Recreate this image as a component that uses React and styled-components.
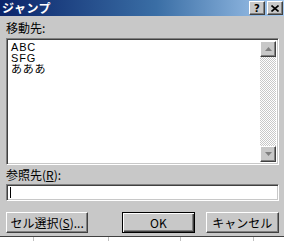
import styled, { createGlobalStyle } from 'styled-components';

const Global = createGlobalStyle`
  html, body {
    margin: 0;
    padding: 0;
    background: #ffffff;
    overflow: hidden;
  }
  body {
    font-family: "Noto Sans CJK JP", "DejaVu Sans", sans-serif;
  }
`

const FACE = '#c8c8c8';

const Screen = styled.div`
  width: 284px;
  height: 241px;
  display: flex;
  flex-direction: column;
`

const Dialog = styled.div`
  height: 236px;
  display: flex;
  flex-direction: column;
  background: ${FACE};
  border-bottom: 1px solid #404040;
`

const TitleBar = styled.div`
  height: 16px;
  display: flex;
  align-items: center;
  justify-content: space-between;
  padding: 0 1px 0 2px;
  background: linear-gradient(90deg, #0a246a 0%, #3a6ea5 55%, #a6caf0 100%);
`

const TitleText = styled.span`
  color: #ffffff;
  font-weight: 700;
  font-size: 12px;
  line-height: 14px;
  letter-spacing: 0.5px;
`

const TitleButtons = styled.div`
  display: flex;
  gap: 2px;
`

const CaptionButton = styled.div`
  width: 14px;
  height: 12px;
  display: flex;
  align-items: center;
  justify-content: center;
  background: ${FACE};
  border: 1px solid;
  border-color: #ffffff #404040 #404040 #ffffff;
  box-shadow: inset -1px -1px #808080;
  font-family: "DejaVu Sans", sans-serif;
  font-weight: 700;
  font-size: 10px;
  color: #000;
`

const Body = styled.div`
  display: flex;
  flex-direction: column;
  padding: 0 5px 0 6px;
`

const Label = styled.div`
  height: ${p => p.$h}px;
  display: flex;
  align-items: center;
  font-size: 12px;
  color: #000;
  u { text-decoration: underline; text-underline-offset: 1px; }
`

const Sunken = styled.div`
  border: 1px solid;
  border-color: #808080 #ffffff #ffffff #808080;
  box-shadow: inset 1px 1px #404040, inset -1px -1px ${FACE};
  background: #ffffff;
`

const ListBox = styled(Sunken)`
  height: 121px;
  display: flex;
  padding: 2px;
`

const Items = styled.div`
  flex: 1;
  padding: 1px 0 0 2px;
  font-family: "Liberation Sans", "Noto Sans CJK JP", sans-serif;
  font-size: 11px;
  line-height: 11px;
  letter-spacing: 0.8px;
  color: #000;
`

const Item = styled.div`
  height: 11px;
`

const ScrollBar = styled.div`
  width: 16px;
  display: flex;
  flex-direction: column;
  justify-content: space-between;
  background-image: conic-gradient(${FACE} 25%, #ffffff 0 50%, ${FACE} 0 75%, #ffffff 0);
  background-size: 2px 2px;
`

const ArrowButton = styled.div`
  width: 14px;
  height: 14px;
  display: flex;
  align-items: center;
  justify-content: center;
  background: ${FACE};
  border: 1px solid;
  border-color: #ffffff #404040 #404040 #ffffff;
  box-shadow: inset -1px -1px #808080;
`

const Input = styled(Sunken)`
  height: 15px;
  display: flex;
  align-items: center;
  padding-left: 3px;
`

const Caret = styled.div`
  width: 1px;
  height: 11px;
  background: #000;
`

const ButtonRow = styled.div`
  display: flex;
  margin-top: 11px;
`

const Button = styled.div`
  width: ${p => p.$w}px;
  height: 19px;
  margin-left: ${p => p.$ml || 0}px;
  display: flex;
  align-items: center;
  justify-content: center;
  background: ${FACE};
  border: 1px solid;
  border-color: #ffffff #404040 #404040 #ffffff;
  box-shadow: inset -1px -1px #808080;
  font-size: 12px;
  color: #000;
  ${p => p.$default && `
    border: 1px solid #000;
    box-shadow: inset 1px 1px #ffffff, inset -1px -1px #404040, inset -2px -2px #808080;
  `}
  u { text-decoration: underline; text-underline-offset: 1px; }
`

const Sheet = styled.div`
  flex: 1;
  display: flex;
  background: #ffffff;
`

const Cell = styled.div`
  width: ${p => p.$w}px;
  border-right: 1px solid #c0c0c0;
`

function Arrow({ up }) {
  return (
    <svg width="7" height="4" viewBox="0 0 7 4">
      <path d={up ? 'M3.5 0 L7 4 L0 4 Z' : 'M0 0 L7 0 L3.5 4 Z'} fill="#808080" />
    </svg>
  );
}

function App() {
  return (
    <Screen>
      <Global />
      <Dialog>
        <TitleBar>
          <TitleText>ジャンプ</TitleText>
          <TitleButtons>
            <CaptionButton>?</CaptionButton>
            <CaptionButton>
              <svg width="8" height="7" viewBox="0 0 8 7">
                <path d="M0.5 0.5 L7.5 6.5 M7.5 0.5 L0.5 6.5" stroke="#000" strokeWidth="1.6" />
              </svg>
            </CaptionButton>
          </TitleButtons>
        </TitleBar>
        <Body>
          <Label $h={22}>移動先:</Label>
          <ListBox>
            <Items>
              <Item>ABC</Item>
              <Item>SFG</Item>
              <Item>あああ</Item>
            </Items>
            <ScrollBar>
              <ArrowButton><Arrow up /></ArrowButton>
              <ArrowButton><Arrow /></ArrowButton>
            </ScrollBar>
          </ListBox>
          <Label $h={19}>参照先(<u>R</u>):</Label>
          <Input><Caret /></Input>
          <ButtonRow>
            <Button $w={82}>セル選択(<u>S</u>)...</Button>
            <Button $w={72} $ml={34} $default>OK</Button>
            <Button $w={73} $ml={11}>キャンセル</Button>
          </ButtonRow>
        </Body>
      </Dialog>
      <Sheet>
        <Cell $w={33} />
        <Cell $w={74} />
        <Cell $w={71} />
        <Cell $w={72} />
      </Sheet>
    </Screen>
  );
}

export default App;
